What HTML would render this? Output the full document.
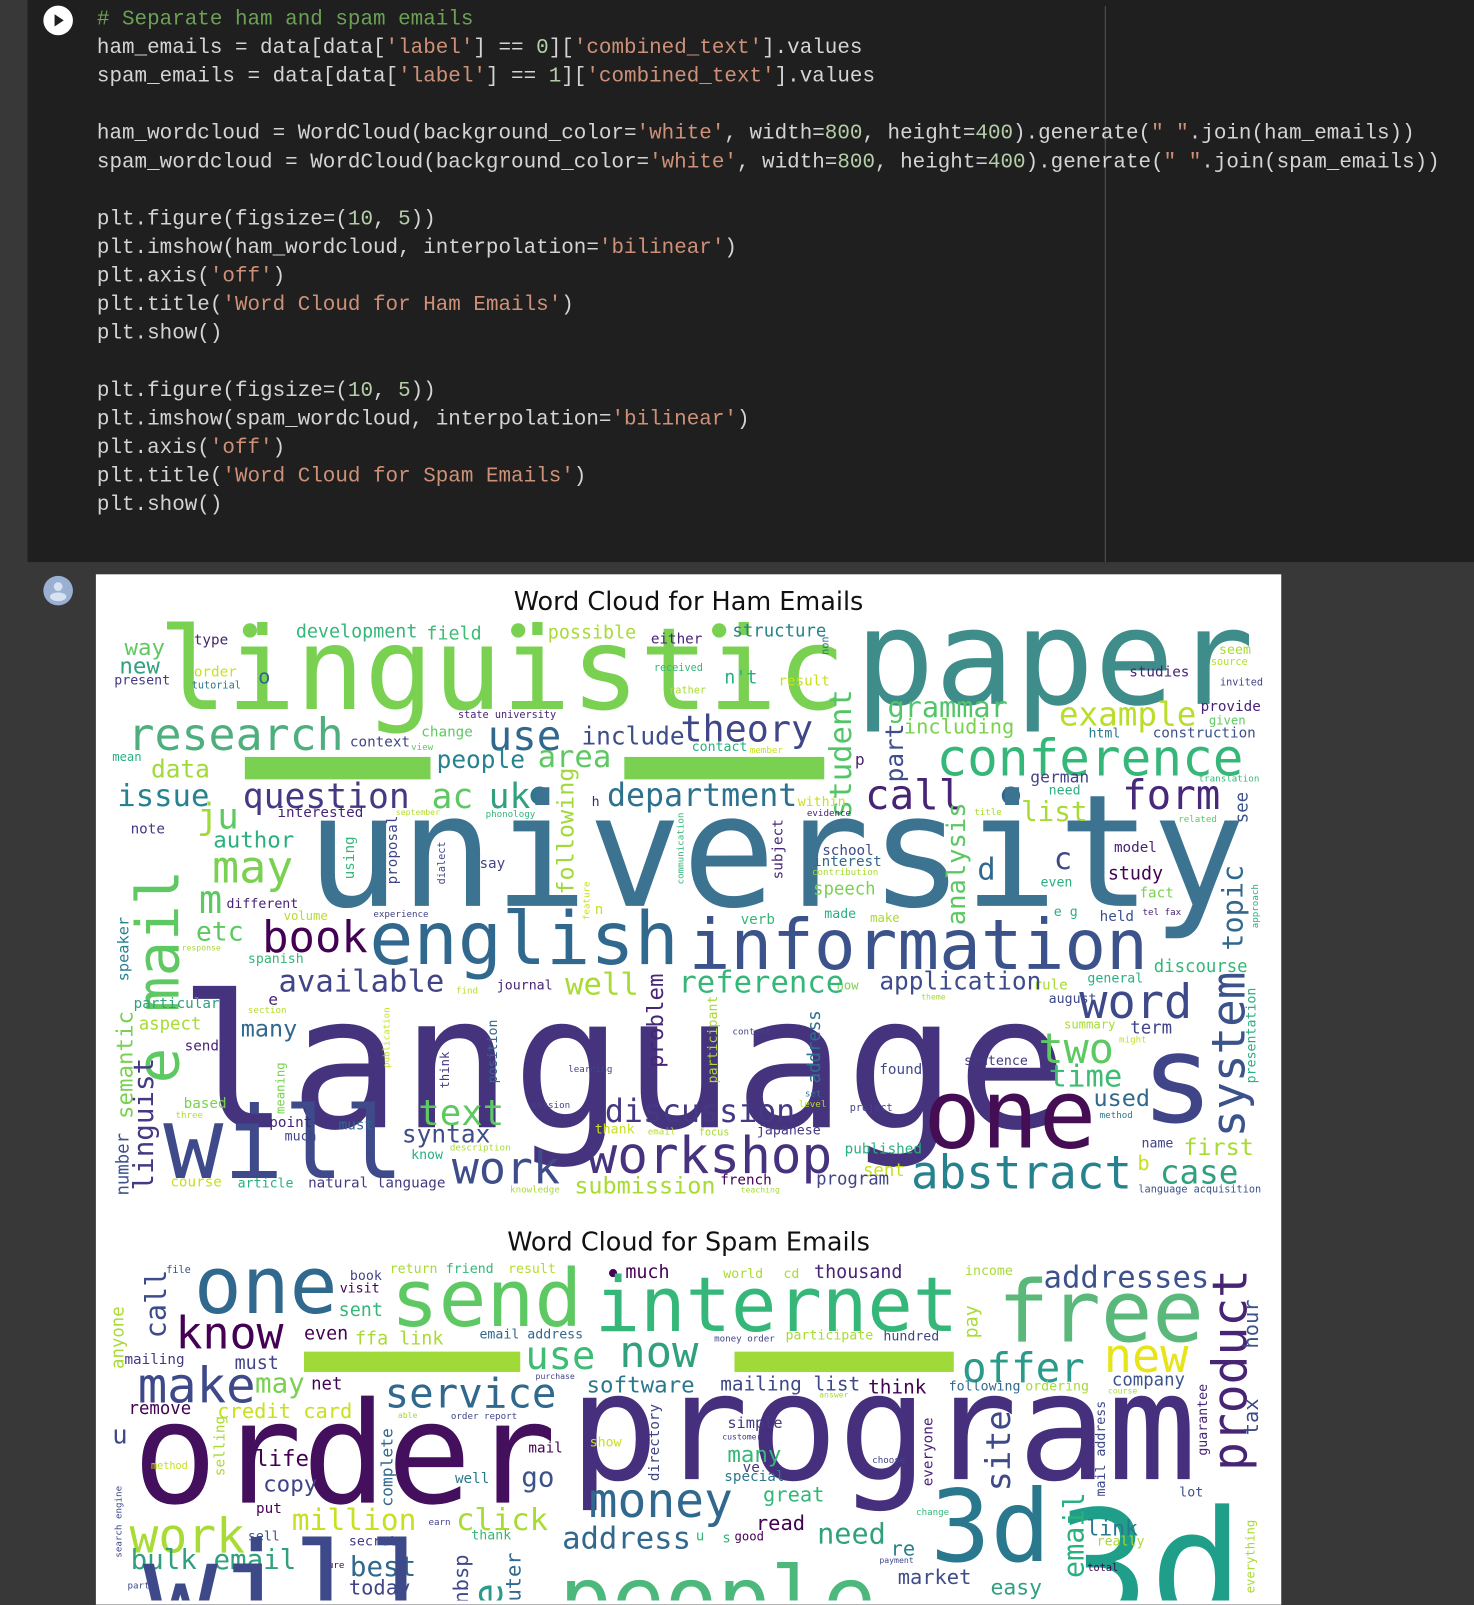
<!DOCTYPE html>
<html><head><meta charset="utf-8">
<style>
html,body{margin:0;padding:0;background:#383838;width:1474px;height:1600px;overflow:hidden}
#w{position:absolute;left:0;top:0;width:1445px;height:1569px;transform:scale(1.0201);transform-origin:0 0}
#code{position:absolute;left:27px;top:0;width:1418px;height:551px;background:#1f1f1f}
#vl{position:absolute;left:1083px;top:6px;width:1px;height:545px;background:#555}
pre{position:absolute;left:95px;top:6px;margin:0;font-family:"Liberation Mono",monospace;font-size:20.5px;line-height:28px;color:#d4d4d4}
.c{color:#6aa155}.s{color:#ce9178}.n{color:#b5cea8}
#img{position:absolute;left:94px;top:563px;width:1162px;height:1010px;background:#fff;overflow:hidden}
svg text{font-family:"DejaVu Sans Mono",monospace}
</style></head><body><div id="w">
<div id="code"></div><div id="vl"></div>
<svg style="position:absolute;left:42px;top:5px" width="30" height="30"><circle cx="15" cy="15" r="14.5" fill="#fff"/><path d="M11.5 9 L20.5 15 L11.5 21Z" fill="#1f1f1f"/></svg>
<svg style="position:absolute;left:42px;top:564px" width="30" height="30"><circle cx="15" cy="15" r="14.5" fill="#9ab0d3"/><circle cx="15" cy="11" r="4.3" fill="#d8e1f0"/><ellipse cx="15" cy="21" rx="8" ry="4.3" fill="#d8e1f0"/></svg>
<pre><span class="c"># Separate ham and spam emails</span>
ham_emails = data[data[<span class="s">'label'</span>] == <span class="n">0</span>][<span class="s">'combined_text'</span>].values
spam_emails = data[data[<span class="s">'label'</span>] == <span class="n">1</span>][<span class="s">'combined_text'</span>].values

ham_wordcloud = WordCloud(background_color=<span class="s">'white'</span>, width=<span class="n">800</span>, height=<span class="n">400</span>).generate(<span class="s">" "</span>.join(ham_emails))
spam_wordcloud = WordCloud(background_color=<span class="s">'white'</span>, width=<span class="n">800</span>, height=<span class="n">400</span>).generate(<span class="s">" "</span>.join(spam_emails))

plt.figure(figsize=(<span class="n">10</span>, <span class="n">5</span>))
plt.imshow(ham_wordcloud, interpolation=<span class="s">'bilinear'</span>)
plt.axis(<span class="s">'off'</span>)
plt.title(<span class="s">'Word Cloud for Ham Emails'</span>)
plt.show()

plt.figure(figsize=(<span class="n">10</span>, <span class="n">5</span>))
plt.imshow(spam_wordcloud, interpolation=<span class="s">'bilinear'</span>)
plt.axis(<span class="s">'off'</span>)
plt.title(<span class="s">'Word Cloud for Spam Emails'</span>)
plt.show()</pre>
<div id="img"></div>
<svg style="position:absolute;left:0;top:0" width="1445" height="1569">
<defs><clipPath id="cp"><rect x="94" y="563" width="1162" height="1006"/></clipPath></defs>
<g clip-path="url(#cp)">
<text x="675" y="598" font-size="25" text-anchor="middle" fill="#111" style="font-family:'DejaVu Sans',sans-serif">Word Cloud for Ham Emails</text>
<text x="675" y="1226" font-size="25" text-anchor="middle" fill="#111" style="font-family:'DejaVu Sans',sans-serif">Word Cloud for Spam Emails</text>
<!-- HAM -->
<g>
<rect x="240" y="742" width="182" height="22" fill="#7ad151"/>
<rect x="612" y="742" width="196" height="22" fill="#7ad151"/>
<circle cx="245" cy="618" r="7" fill="#7ad151"/><circle cx="508" cy="618" r="7" fill="#7ad151"/><circle cx="705" cy="618" r="7" fill="#7ad151"/>
<circle cx="529" cy="780" r="9" fill="#2a788e"/><circle cx="991" cy="780" r="9" fill="#31688e"/>
<text x="155" y="695" font-size="112" fill="#7ad151">linguistic</text>
<text x="838" y="690" font-size="130" fill="#3f8d8a">paper</text>
<text x="300" y="888" font-size="153" fill="#3b7390">university</text>
<text x="175" y="1105" font-size="181" fill="#46337e">language</text>
<text x="160" y="1155" font-size="98" fill="#3e4a89">will</text>
<text x="905" y="1125" font-size="94" fill="#440d54">one</text>
<text x="1118" y="1100" font-size="120" fill="#404588">s</text>
<text x="362" y="945" font-size="72" fill="#31688e">english</text>
<text x="675" y="950" font-size="68" fill="#3b528b">information</text>
<text x="125" y="735" font-size="44" fill="#4fae7e">research</text>
<text x="918" y="760" font-size="50" fill="#35b779">conference</text>
<text x="848" y="793" font-size="40" fill="#482475">call</text>
<text x="1100" y="793" font-size="40" fill="#482878">form</text>
<text x="595" y="790" font-size="31" fill="#2c728e">department</text>
<text x="575" y="1150" font-size="50" fill="#46327e">workshop</text>
<text x="893" y="1165" font-size="45" fill="#26828e">abstract</text>
<text x="593" y="1100" font-size="31" fill="#443983">discussion</text>
<text x="443" y="1160" font-size="44" fill="#3e4c8a">work</text>
<text x="257" y="933" font-size="43" fill="#440154">book</text>
<text x="273" y="972" font-size="30" fill="#414487">available</text>
<text x="1058" y="998" font-size="46" fill="#3e4989">word</text>
<text x="1018" y="1042" font-size="41" fill="#5ec962">two</text>
<text x="1028" y="1065" font-size="30" fill="#3fbc73">time</text>
<text transform="translate(1220 1115) rotate(-90)" font-size="45" fill="#3b528b">system</text>
<text transform="translate(175 1062) rotate(-90)" font-size="58" fill="#5ec962">e mail</text>
<text transform="translate(150 1167) rotate(-90)" font-size="27" fill="#443a83">linguist</text>
<text transform="translate(130 1097) rotate(-90)" font-size="22" fill="#7ad151">semantic</text>
<text transform="translate(126 1172) rotate(-90)" font-size="17" fill="#3b528b">number</text>
<text transform="translate(126 962) rotate(-90)" font-size="15" fill="#26828e">speaker</text>
<text transform="translate(834 802) rotate(-90)" font-size="30" fill="#52c569">student</text>
<text transform="translate(885 767) rotate(-90)" font-size="24" fill="#3d4e8a">part</text>
<text transform="translate(946 907) rotate(-90)" font-size="25" fill="#5cc863">analysis</text>
<text transform="translate(562 877) rotate(-90)" font-size="23" fill="#a0da39">following</text>
<text transform="translate(1218 932) rotate(-90)" font-size="28" fill="#31688e">topic</text>
<text transform="translate(1231 1062) rotate(-90)" font-size="13" fill="#2ab07f">presentation</text>
<text transform="translate(1223 807) rotate(-90)" font-size="17" fill="#3b528b">see</text>
<text transform="translate(650 1047) rotate(-90)" font-size="22" fill="#482677">problem</text>
<text transform="translate(804 1062) rotate(-90)" font-size="17" fill="#2d708e">address</text>
<text transform="translate(703 1062) rotate(-90)" font-size="13" fill="#a8db34">participant</text>
<text transform="translate(767 862) rotate(-90)" font-size="14" fill="#482677">subject</text>
<text transform="translate(389 867) rotate(-90)" font-size="14" fill="#414487">proposal</text>
<text transform="translate(347 862) rotate(-90)" font-size="14" fill="#35b779">using</text>
<text transform="translate(487 1062) rotate(-90)" font-size="13" fill="#31688e">position</text>
<text transform="translate(440 1067) rotate(-90)" font-size="12" fill="#443983">think</text>
<text transform="translate(279 1092) rotate(-90)" font-size="12" fill="#7ad151">meaning</text>
<text transform="translate(436 867) rotate(-90)" font-size="10" fill="#414487">dialect</text>
<text transform="translate(670 867) rotate(-90)" font-size="9" fill="#35b779">communication</text>
<text transform="translate(578 902) rotate(-90)" font-size="9" fill="#c8e020">feature</text>
<text transform="translate(1233 910) rotate(-90)" font-size="9" fill="#2ab07f">approach</text>
<text transform="translate(382 1047) rotate(-90)" font-size="9" fill="#c8e020">publication</text>
<text transform="translate(812 642) rotate(-90)" font-size="10" fill="#2a788e">non</text>
<g font-size="14">
<text x="122" y="642" font-size="22" fill="#5ec962">way</text>
<text x="190" y="632" fill="#482475">type</text>
<text x="290" y="625" font-size="18" fill="#35b779">development</text>
<text x="418" y="627" font-size="18" fill="#3fbc73">field</text>
<text x="537" y="626" font-size="18" fill="#a8db34">possible</text>
<text x="638" y="631" fill="#482475">either</text>
<text x="718" y="624" font-size="17" fill="#26828e">structure</text>
<text x="117" y="660" font-size="22" fill="#31a07f">new</text>
<text x="112" y="671" font-size="13" fill="#443983">present</text>
<text x="190" y="663" fill="#c8e020">order</text>
<text x="188" y="675" font-size="10" fill="#2a788e">tutorial</text>
<text x="253" y="670" font-size="20" fill="#31688e">o</text>
<text x="641" y="658" font-size="10" fill="#35b779">received</text>
<text x="656" y="680" font-size="10" fill="#a8db34">rather</text>
<text x="710" y="670" font-size="18" fill="#2ab07f">n't</text>
<text x="763" y="672" fill="#c8e020">result</text>
<text x="870" y="703" font-size="28" fill="#52c569">grammar</text>
<text x="886" y="719" font-size="20" fill="#7ad151">including</text>
<text x="1038" y="711" font-size="32" fill="#b8de29">example</text>
<text x="1107" y="663" fill="#482475">studies</text>
<text x="1195" y="641" font-size="13" fill="#a8db34">seem</text>
<text x="1187" y="652" font-size="10" fill="#b5de2b">source</text>
<text x="1196" y="672" font-size="10" fill="#414487">invited</text>
<text x="1177" y="697" fill="#482475">provide</text>
<text x="1185" y="710" font-size="12" fill="#5ec962">given</text>
<text x="1130" y="723" fill="#3b528b">construction</text>
<text x="1067" y="723" font-size="13" fill="#2a788e">html</text>
<text x="449" y="704" font-size="10" fill="#482475">state university</text>
<text x="413" y="722" fill="#5ec962">change</text>
<text x="343" y="732" fill="#414487">context</text>
<text x="403" y="735" font-size="9" fill="#5ec962">view</text>
<text x="478" y="735" font-size="40" fill="#31688e">use</text>
<text x="570" y="730" font-size="24" fill="#3e4c8a">include</text>
<text x="667" y="727" font-size="36" fill="#404688">theory</text>
<text x="678" y="736" font-size="13" fill="#2ab07f">contact</text>
<text x="735" y="738" font-size="9" fill="#c8e020">member</text>
<text x="110" y="746" font-size="12" fill="#2ab07f">mean</text>
<text x="148" y="762" font-size="24" fill="#a0da39">data</text>
<text x="428" y="753" font-size="24" fill="#26828e">people</text>
<text x="527" y="752" font-size="30" fill="#5ec962">area</text>
<text x="838" y="750" font-size="16" fill="#482475">p</text>
<text x="1010" y="767" font-size="16" fill="#414487">german</text>
<text x="1028" y="779" font-size="13" fill="#2ab07f">need</text>
<text x="1175" y="766" font-size="9" fill="#35b779">translation</text>
<text x="1155" y="806" font-size="9" fill="#5ec962">related</text>
<text x="115" y="790" font-size="30" fill="#26828e">issue</text>
<text x="238" y="792" font-size="34" fill="#443983">question</text>
<text x="423" y="792" font-size="34" fill="#5ec962">ac</text>
<text x="479" y="792" font-size="34" fill="#31a07f">uk</text>
<text x="580" y="790" font-size="13" fill="#482475">h</text>
<text x="272" y="801" fill="#482475">interested</text>
<text x="388" y="799" font-size="8" fill="#b5de2b">september</text>
<text x="476" y="801" font-size="9" fill="#35b779">phonology</text>
<text x="782" y="790" font-size="13" fill="#c8e020">within</text>
<text x="791" y="800" font-size="9" fill="#482475">evidence</text>
<text x="955" y="799" font-size="9" fill="#a8db34">title</text>
<text x="1001" y="805" font-size="27" fill="#a8db34">list</text>
<text x="193" y="812" font-size="35" fill="#a0da39">j</text>
<text x="213" y="812" font-size="35" fill="#5ec962">u</text>
<text x="128" y="817" fill="#443983">note</text>
<text x="209" y="831" font-size="22" fill="#2ab07f">author</text>
<text x="208" y="865" font-size="44" fill="#7ad151">may</text>
<text x="195" y="895" font-size="38" fill="#5ec962">m</text>
<text x="222" y="890" font-size="13" fill="#482475">different</text>
<text x="278" y="902" font-size="12" fill="#b5de2b">volume</text>
<text x="366" y="899" font-size="9" fill="#414487">experience</text>
<text x="470" y="851" fill="#414487">say</text>
<text x="806" y="838" fill="#3e4989">school</text>
<text x="797" y="849" fill="#31688e">interest</text>
<text x="796" y="858" font-size="9" fill="#a8db34">contribution</text>
<text x="797" y="877" font-size="17" fill="#7ad151">speech</text>
<text x="1092" y="835" fill="#482475">model</text>
<text x="1033" y="852" font-size="30" fill="#3e4989">c</text>
<text x="958" y="862" font-size="30" fill="#31688e">d</text>
<text x="1086" y="862" font-size="18" fill="#440154">study</text>
<text x="1020" y="869" font-size="13" fill="#2ab07f">even</text>
<text x="1117" y="880" fill="#7ad151">fact</text>
<text x="808" y="900" font-size="13" fill="#2ab07f">made</text>
<text x="853" y="904" font-size="12" fill="#a8db34">make</text>
<text x="1033" y="898" font-size="13" fill="#2ab07f">e g</text>
<text x="1078" y="903" fill="#3b528b">held</text>
<text x="1120" y="897" font-size="9" fill="#482475">tel fax</text>
<text x="726" y="906" fill="#35b779">verb</text>
<text x="583" y="896" fill="#c8e020">n</text>
<text x="192" y="922" font-size="26" fill="#5ec962">etc</text>
<text x="178" y="932" font-size="8" fill="#a8db34">response</text>
<text x="243" y="944" font-size="13" fill="#35b779">spanish</text>
<text x="1131" y="953" font-size="17" fill="#35b779">discourse</text>
<text x="1066" y="963" font-size="13" fill="#2ab07f">general</text>
<text x="1028" y="983" font-size="13" fill="#3e4989">august</text>
<text x="1013" y="970" fill="#a8db34">rule</text>
<text x="903" y="980" font-size="8" fill="#a8db34">theme</text>
<text x="862" y="970" font-size="24" fill="#3e4c8a">application</text>
<text x="820" y="970" font-size="12" fill="#7ad151">now</text>
<text x="665" y="973" font-size="30" fill="#35b779">reference</text>
<text x="554" y="975" font-size="30" fill="#a8db34">well</text>
<text x="487" y="970" font-size="13" fill="#482475">journal</text>
<text x="447" y="974" font-size="9" fill="#b5de2b">find</text>
<text x="263" y="985" font-size="16" fill="#482475">e</text>
<text x="131" y="988" fill="#31a07f">particular</text>
<text x="243" y="993" font-size="9" fill="#b5de2b">section</text>
<text x="136" y="1009" font-size="17" fill="#a8db34">aspect</text>
<text x="181" y="1030" fill="#482475">send</text>
<text x="236" y="1016" font-size="23" fill="#31688e">many</text>
<text x="1043" y="1008" font-size="12" fill="#a8db34">summary</text>
<text x="1108" y="1013" font-size="17" fill="#414487">term</text>
<text x="1097" y="1022" font-size="9" fill="#c8e020">might</text>
<text x="718" y="1014" font-size="9" fill="#414487">content</text>
<text x="945" y="1044" font-size="13" fill="#443983">sentence</text>
<text x="862" y="1053" fill="#3e4c8a">found</text>
<text x="557" y="1051" font-size="9" fill="#414487">learning</text>
<text x="1072" y="1084" font-size="23" fill="#31688e">used</text>
<text x="1078" y="1096" font-size="9" fill="#2a788e">method</text>
<text x="833" y="1089" font-size="10" fill="#414487">project</text>
<text x="783" y="1085" font-size="9" fill="#b5de2b">level</text>
<text x="789" y="1075" font-size="9" fill="#2a788e">set</text>
<text x="925" y="1108" fill="#fff">t</text>
<text x="521" y="1086" font-size="9" fill="#414487">session</text>
<text x="180" y="1086" fill="#7ad151">based</text>
<text x="172" y="1096" font-size="9" fill="#b5de2b">three</text>
<text x="410" y="1103" font-size="35" fill="#5ec962">text</text>
<text x="264" y="1105" fill="#482475">point</text>
<text x="279" y="1118" font-size="13" fill="#414487">much</text>
<text x="332" y="1107" fill="#31688e">must</text>
<text x="394" y="1120" font-size="24" fill="#3e4c8a">syntax</text>
<text x="441" y="1128" font-size="9" fill="#a8db34">description</text>
<text x="403" y="1136" font-size="13" fill="#2ab07f">know</text>
<text x="583" y="1111" font-size="13" fill="#c8e020">thank</text>
<text x="635" y="1112" font-size="9" fill="#b5de2b">email</text>
<text x="685" y="1113" font-size="10" fill="#a8db34">focus</text>
<text x="742" y="1112" font-size="13" fill="#443983">japanese</text>
<text x="828" y="1131" fill="#2ab07f">published</text>
<text x="1119" y="1125" font-size="13" fill="#414487">name</text>
<text x="1160" y="1132" font-size="23" fill="#a8db34">first</text>
<text x="1115" y="1147" font-size="20" fill="#c8e020">b</text>
<text x="1137" y="1160" font-size="32" fill="#31a07f">case</text>
<text x="1116" y="1169" font-size="10" fill="#3b528b">language acquisition</text>
<text x="846" y="1153" font-size="17" fill="#c8e020">sent</text>
<text x="800" y="1161" font-size="17" fill="#414487">program</text>
<text x="706" y="1161" fill="#440154">french</text>
<text x="726" y="1169" font-size="8" fill="#a8db34">teaching</text>
<text x="563" y="1170" font-size="23" fill="#a8db34">submission</text>
<text x="500" y="1169" font-size="9" fill="#a8db34">knowledge</text>
<text x="167" y="1163" fill="#c8e020">course</text>
<text x="233" y="1164" font-size="13" fill="#2ab07f">article</text>
<text x="302" y="1164" fill="#443983">natural language</text>
</g>
</g>
<!-- SPAM -->
<g font-size="14">
<rect x="298" y="1325" width="212" height="20" fill="#a0da39"/>
<rect x="720" y="1325" width="215" height="20" fill="#a0da39"/>
<circle cx="601" cy="1248" r="4" fill="#440154"/>
<text x="190" y="1287" font-size="78" fill="#31688e">one</text>
<text x="383" y="1300" font-size="78" fill="#5ec962">send</text>
<text x="583" y="1305" font-size="74" fill="#35b779">internet</text>
<text x="978" y="1315" font-size="84" fill="#5ab87a">free</text>
<text x="1023" y="1262" font-size="30" fill="#3b528b">addresses</text>
<text transform="translate(1222 1442) rotate(-90)" font-size="47" fill="#482475">product</text>
<text transform="translate(1233 1322) rotate(-90)" font-size="20" fill="#3b528b">hour</text>
<text transform="translate(1233 1407) rotate(-90)" font-size="20" fill="#3e4989">tax</text>
<text x="172" y="1322" font-size="44" fill="#440154">know</text>
<text transform="translate(162 1312) rotate(-90)" font-size="28" fill="#3e4c8a">call</text>
<text transform="translate(121 1342) rotate(-90)" font-size="17" fill="#a8db34">anyone</text>
<text x="163" y="1248" font-size="10" fill="#3b528b">file</text>
<text x="343" y="1255" font-size="13" fill="#414487">book</text>
<text x="333" y="1267" font-size="13" fill="#440154">visit</text>
<text x="332" y="1290" font-size="18" fill="#35b779">sent</text>
<text x="382" y="1248" font-size="13" fill="#a8db34">return</text>
<text x="437" y="1248" font-size="13" fill="#35b779">friend</text>
<text x="498" y="1248" font-size="13" fill="#b5de2b">result</text>
<text x="298" y="1313" font-size="18" fill="#440154">even</text>
<text x="348" y="1318" font-size="18" fill="#a8db34">ffa link</text>
<text x="470" y="1312" font-size="13" fill="#31688e">email address</text>
<text x="613" y="1253" font-size="18" fill="#440154">much</text>
<text x="709" y="1253" font-size="13" fill="#a8db34">world</text>
<text x="768" y="1253" font-size="13" fill="#a8db34">cd</text>
<text x="798" y="1253" font-size="18" fill="#482475">thousand</text>
<text x="946" y="1250" font-size="13" fill="#a8db34">income</text>
<text transform="translate(958 1312) rotate(-90)" font-size="18" fill="#a8db34">pay</text>
<text x="515" y="1342" font-size="38" fill="#3fbc73">use</text>
<text x="607" y="1340" font-size="43" fill="#31a07f">now</text>
<text x="700" y="1315" font-size="9" fill="#414487">money order</text>
<text x="770" y="1313" font-size="13" fill="#a8db34">participate</text>
<text x="866" y="1314" font-size="13" fill="#414487">hundred</text>
<text x="943" y="1355" font-size="40" fill="#2a9a8a">offer</text>
<text x="1082" y="1345" font-size="46" fill="#e7e419">new</text>
<text x="1090" y="1358" font-size="17" fill="#3b528b">company</text>
<text x="1086" y="1366" font-size="8" fill="#a8db34">course</text>
<text x="122" y="1337" fill="#443983">mailing</text>
<text x="230" y="1342" font-size="18" fill="#414487">must</text>
<text x="135" y="1375" font-size="48" fill="#3e4989">make</text>
<text x="250" y="1365" font-size="27" fill="#7ad151">may</text>
<text x="305" y="1362" font-size="17" fill="#440154">net</text>
<text x="377" y="1380" font-size="40" fill="#31688e">service</text>
<text x="525" y="1352" font-size="8" fill="#414487">purchase</text>
<text x="575" y="1365" font-size="22" fill="#2a788e">software</text>
<text x="706" y="1363" font-size="19" fill="#3e4989">mailing list</text>
<text x="851" y="1366" font-size="19" fill="#440154">think</text>
<text x="803" y="1370" font-size="8" fill="#a8db34">answer</text>
<text x="930" y="1363" font-size="13" fill="#31688e">following</text>
<text x="1005" y="1363" font-size="13" fill="#a8db34">ordering</text>
<text x="126" y="1386" font-size="17" fill="#440154">remove</text>
<text x="213" y="1390" font-size="20" fill="#c8e020">credit card</text>
<text x="390" y="1390" font-size="8" fill="#a8db34">able</text>
<text x="442" y="1391" font-size="9" fill="#414487">order report</text>
<text x="130" y="1473" font-size="138" fill="#440f5c">order</text>
<text x="558" y="1450" font-size="146" fill="#46307d">program</text>
<text x="110" y="1415" font-size="25" fill="#3e4989">u</text>
<text transform="translate(220 1447) rotate(-90)" font-size="14" fill="#a8db34">selling</text>
<text x="148" y="1440" font-size="10" fill="#c8e020">method</text>
<text x="250" y="1437" font-size="22" fill="#440154">life</text>
<text x="258" y="1462" font-size="22" fill="#414487">copy</text>
<text x="251" y="1483" fill="#440154">put</text>
<text transform="translate(385 1477) rotate(-90)" font-size="16" fill="#31688e">complete</text>
<text x="518" y="1424" fill="#440154">mail</text>
<text x="446" y="1454" fill="#2a788e">well</text>
<text x="511" y="1457" font-size="27" fill="#3b528b">go</text>
<text x="578" y="1418" font-size="13" fill="#c8e020">show</text>
<text transform="translate(646 1452) rotate(-90)" fill="#414487">directory</text>
<text x="713" y="1400" font-size="15" fill="#443983">simple</text>
<text x="708" y="1411" font-size="8" fill="#443983">customer</text>
<text x="713" y="1433" font-size="22" fill="#35b779">many</text>
<text x="728" y="1443" fill="#443983">ve</text>
<text x="710" y="1452" fill="#2a788e">special</text>
<text x="855" y="1434" font-size="9" fill="#414487">choose</text>
<text transform="translate(914 1457) rotate(-90)" fill="#482475">everyone</text>
<text transform="translate(990 1462) rotate(-90)" font-size="33" fill="#3e4989">site</text>
<text transform="translate(1083 1467) rotate(-90)" font-size="13" fill="#3e4989">mail address</text>
<text transform="translate(1183 1427) rotate(-90)" font-size="13" fill="#482475">guarantee</text>
<text x="577" y="1487" font-size="47" fill="#31688e">money</text>
<text x="748" y="1472" font-size="20" fill="#35b779">great</text>
<text x="898" y="1485" font-size="9" fill="#35b779">change</text>
<text x="912" y="1530" font-size="98" fill="#2a788e">3d</text>
<text x="1035" y="1590" font-size="153" fill="#1f9e89">3d</text>
<text x="1156" y="1467" font-size="13" fill="#3b528b">lot</text>
<text transform="translate(1062 1547) rotate(-90)" font-size="28" fill="#2ab07f">email</text>
<text x="1065" y="1505" font-size="21" fill="#2a788e">link</text>
<text x="1075" y="1515" font-size="13" fill="#a8db34">really</text>
<text transform="translate(1230 1562) rotate(-90)" font-size="12" fill="#a8db34">everything</text>
<text x="1066" y="1540" font-size="10" fill="#440154">total</text>
<text x="127" y="1522" font-size="47" fill="#a8db34">work</text>
<text x="286" y="1500" font-size="29" fill="#c8e020">million</text>
<text x="420" y="1495" font-size="9" fill="#414487">earn</text>
<text x="447" y="1500" font-size="30" fill="#a8db34">click</text>
<text x="243" y="1510" font-size="13" fill="#3b528b">sell</text>
<text transform="translate(119 1527) rotate(-90)" font-size="9" fill="#3e4989">search engine</text>
<text x="342" y="1515" font-size="13" fill="#443983">secret</text>
<text x="462" y="1509" font-size="13" fill="#35b779">thank</text>
<text x="551" y="1518" font-size="30" fill="#31688e">address</text>
<text x="682" y="1510" fill="#35b779">u</text>
<text x="708" y="1512" fill="#35b779">s</text>
<text x="720" y="1510" font-size="12" fill="#440154">good</text>
<text x="741" y="1500" font-size="20" fill="#440154">read</text>
<text x="801" y="1513" font-size="28" fill="#31a07f">need</text>
<text x="873" y="1525" font-size="20" fill="#26828e">re</text>
<text x="862" y="1532" font-size="8" fill="#3e4989">payment</text>
<text x="128" y="1538" font-size="27" fill="#31a07f">bulk email</text>
<text x="316" y="1537" font-size="9" fill="#440154">sure</text>
<text x="343" y="1545" font-size="27" fill="#31688e">best</text>
<text x="342" y="1563" font-size="20" fill="#414487">today</text>
<text x="125" y="1557" font-size="9" fill="#3e4989">part</text>
<text transform="translate(459 1572) rotate(-90)" font-size="20" fill="#3e4989">nbsp</text>
<text transform="translate(492 1600) rotate(-90)" font-size="40" fill="#2a9a8a">ee</text>
<text transform="translate(510 1570) rotate(-90)" font-size="20" fill="#31688e">uter</text>
<text x="880" y="1553" font-size="20" fill="#3e4c8a">market</text>
<text x="971" y="1563" font-size="21" fill="#31a07f">easy</text>
<text x="140" y="1600" font-size="122" fill="#3e4989">will</text>
<text x="548" y="1597" font-size="86" fill="#4cb87c">people</text>
<text x="1020" y="1622" font-size="83" fill="#3e4989">name</text>
</g>
</g>
</svg>
</div></body></html>
